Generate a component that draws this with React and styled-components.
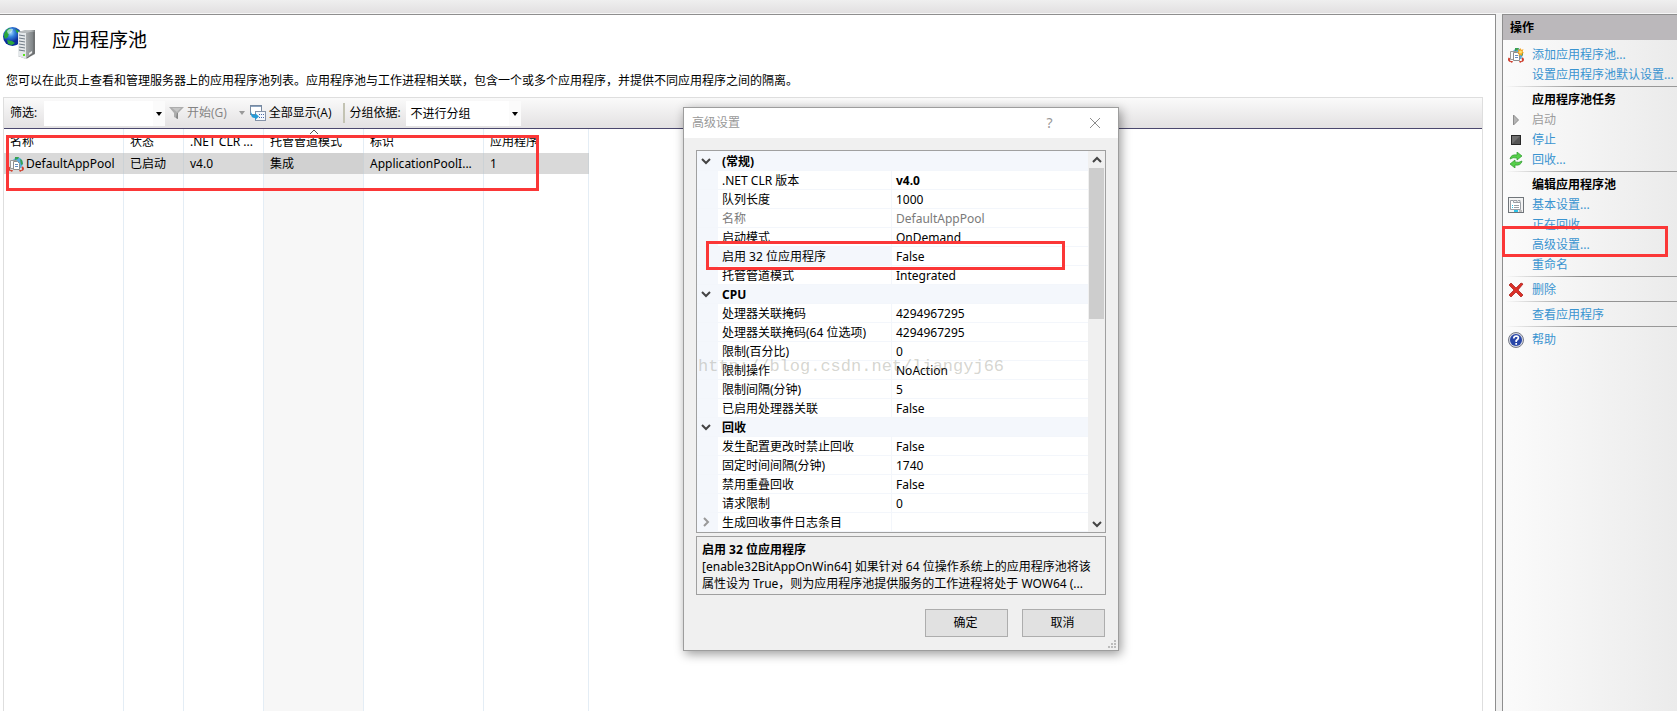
import React from "react";
import styled, { createGlobalStyle, css } from "styled-components";

const GlobalStyle = createGlobalStyle`
  *, *::before, *::after { box-sizing: border-box; }
  body {
    margin: 0;
    background: #f0f0f0;
    color: #000;
    font: 12px/16px "Noto Sans", "Noto Sans CJK SC", sans-serif;
  }
  button, input, select { font: inherit; color: inherit; border-radius: 0; }
  button { padding: 0; border: 0; background: none; }
`;

const Page = styled.div`
  position: relative;
  display: flex;
  flex-direction: column;
  height: 100vh;
  overflow: hidden;
`;
const TopStrip = styled.div`
  flex: none;
  height: 14px;
  background: linear-gradient(#efefef, #e2e0e1);
  border-bottom: 1px solid #f6f6f6;
`;
const Columns = styled.div`
  flex: 1;
  display: flex;
  gap: 6px;
  min-height: 0;
`;
const Main = styled.main`
  flex: 1;
  min-width: 0;
  display: flex;
  flex-direction: column;
  padding: 12px 12px 0 3px;
  background: #fff;
  border-top: 1px solid #8e8e8e;
  border-right: 1px solid #8e8e8e;
`;
const TitleRow = styled.header`
  display: flex;
  align-items: center;
  gap: 17px;
  height: 32px;
`;
const Title = styled.h1`
  margin: 0;
  padding-bottom: 6px;
  font-size: 19px;
  line-height: 24px;
  font-weight: 400;
`;
const Intro = styled.p`
  margin: 14px 0 8px 3px;
`;
const ListFrame = styled.section`
  flex: 1;
  min-height: 0;
  display: flex;
  flex-direction: column;
  border: 1px solid #dedede;
  border-bottom: 0;
`;
const Toolbar = styled.div`
  flex: none;
  display: flex;
  align-items: center;
  height: 31px;
  padding-left: 6px;
  background: linear-gradient(#fafafa, #e3e1e2);
  border-bottom: 1px solid #4b486e;
  font-family: "Open Sans", "Noto Sans CJK SC", sans-serif;
`;
const ToolLabel = styled.label`
  width: ${(p) => p.$width}px;
  white-space: nowrap;
`;
const Combo = styled.div`
  position: relative;
  width: ${(p) => p.$width}px;
  height: 25px;
  background: linear-gradient(90deg, #fff 0 calc(100% - 12px), #fbfbfb 0);
  input, select {
    appearance: none;
    width: 100%;
    height: 100%;
    padding: 2px 14px 0 4px;
    border: 0;
    background: transparent;
  }
  > svg {
    position: absolute;
    right: 3px;
    top: 11px;
    pointer-events: none;
  }
`;
const ToolButton = styled.button`
  display: flex;
  align-items: center;
  gap: 3px;
  height: 24px;
  margin-left: ${(p) => p.$gap}px;
  white-space: nowrap;
  &:disabled { color: #838383; }
`;
const ToolDivider = styled.span`
  width: 2px;
  height: 20px;
  margin: 0 4px 0 12px;
  background: #c3c3b3;
`;
const TableArea = styled.div`
  position: relative;
  flex: 1;
  min-height: 0;
  display: flex;
  align-items: stretch;
`;
const PoolTable = styled.table`
  width: 585px;
  table-layout: fixed;
  border-collapse: separate;
  border-spacing: 0;
  th, td {
    padding: 0 0 0 6px;
    border-right: 1px solid #e4edf5;
    text-align: left;
    font-weight: 400;
    white-space: nowrap;
  }
`;
const HeadRow = styled.tr`
  height: 24px;
  th { padding-top: 2px; }
`;
const HeadCell = styled.th`
  position: relative;
  > svg { position: absolute; left: 45px; top: 0; }
`;
const PoolRow = styled.tr`
  height: 21px;
  td { background: #d9d9d9; border-right-color: #ccd2d6; }
  td:nth-child(4) { background: #d1d1d1; }
`;
const EmptyRow = styled.tr`
  td:nth-child(4) { background: #f7f7f7; }
`;
const PoolName = styled.span`
  display: flex;
  align-items: center;
  gap: 2px;
  margin-left: -2px;
`;
const Mark = styled.span`
  position: absolute;
  z-index: 2;
  border: 3px solid #fb3737;
  pointer-events: none;
  left: ${(p) => p.$left}px;
  top: ${(p) => p.$top}px;
  width: ${(p) => p.$width}px;
  height: ${(p) => p.$height}px;
`;

const Sidebar = styled.aside`
  width: 175px;
  flex: none;
  border-top: 1px solid #8e8e8e;
  border-left: 1px solid #8e8e8e;
  background: linear-gradient(90deg, #fbfbfb, #ebebeb);
`;
const SideHead = styled.h2`
  margin: 0 0 5px;
  padding-left: 7px;
  background: #bbb8bb;
  font-size: 12px;
  line-height: 25px;
`;
const Group = styled.section`
  position: relative;
  & + &::before {
    content: "";
    display: block;
    height: 1px;
    margin: 1px 0 3px 2px;
    background: linear-gradient(90deg, transparent, #8f8f8f 45%, #9a9a9a);
  }
`;
const itemBox = css`
  display: grid;
  grid-template-columns: 24px auto;
  align-items: center;
  height: 20px;
  margin: 0;
  padding-left: 5px;
  font-size: 12px;
  white-space: nowrap;
`;
const GroupTitle = styled.h3`
  ${itemBox}
  &::before { content: ""; }
`;
const Action = styled.a`
  ${itemBox}
  color: ${(p) => (p.$off ? "#9c9c9c" : "#3a94d0")};
  text-decoration: none;
`;
const IconSlot = styled.span`
  height: 16px;
`;

const Dialog = styled.div`
  position: absolute;
  left: 683px;
  top: 107px;
  width: 436px;
  border: 1px solid #9d9d9d;
  background: #f0f0f0;
  box-shadow: 2px 3px 10px rgba(0, 0, 0, 0.4);
`;
const DialogBar = styled.header`
  display: flex;
  align-items: center;
  height: 30px;
  padding: 0 16px 0 8px;
  background: #fff;
  color: #999;
`;
const DialogTitle = styled.h2`
  flex: 1;
  margin: 0;
  font-size: 12px;
  font-weight: 400;
`;
const BarButton = styled.button`
  width: 15px;
  height: 20px;
  margin-left: 30px;
  font-size: 14px;
  display: grid;
  place-items: center;
`;
const DialogBody = styled.div`
  position: relative;
  padding: 12px 12px 13px;
`;
const GridFrame = styled.div`
  display: flex;
  height: 383px;
  border: 1px solid #a0a0a0;
  background: #f4f7fc;
`;
const PropTable = styled.table`
  flex: 1;
  table-layout: fixed;
  align-self: flex-start;
  margin-top: 1px;
  border-collapse: separate;
  border-spacing: 0;
  tr { height: 19px; }
  th, td {
    height: 19px;
    padding: 2px 0 0 4px;
    text-align: left;
    font-weight: 400;
    white-space: nowrap;
    background: #fff;
    border-bottom: 1px solid #f3f6fb;
  }
  tr > :first-child { padding: 0; background: #f4f7fc; }
`;
const CategoryRow = styled.tr`
  th, td { background: #f4f7fc; font-weight: 700; }
`;
const PropRow = styled.tr`
  color: ${(p) => (p.$off ? "#7a7a7a" : "#000")};
  th { border-right: 1px solid #f3f6fb; background: ${(p) => (p.$picked ? "#f4f7fc" : "#fff")}; }
  td:last-child { font-weight: ${(p) => (p.$bold ? 700 : 400)}; }
`;
const Toggle = styled.button`
  display: grid;
  place-items: center;
  width: 18px;
  height: 18px;
`;
const ScrollBar = styled.div`
  display: flex;
  flex-direction: column;
  width: 17px;
  padding: 0 1px;
  background: #f0f0f0;
`;
const ScrollButton = styled.button`
  display: grid;
  place-items: center;
  height: 17px;
`;
const ScrollTrack = styled.div`
  flex: 1;
  &::before {
    content: "";
    display: block;
    height: 151px;
    background: #cdcdcd;
  }
`;
const Help = styled.div`
  height: 59px;
  margin-top: 3px;
  padding: 4px 5px;
  border: 1px solid #a0a0a0;
  line-height: 17px;
`;
const HelpText = styled.p`
  margin: 0;
  white-space: nowrap;
`;
const Buttons = styled.div`
  display: flex;
  justify-content: flex-end;
  gap: 14px;
  margin: 14px 1px 0 0;
`;
const DialogButton = styled.button`
  width: 83px;
  height: 28px;
  padding-right: 2px;
  border: 1px solid #adadad;
  background: #e1e1e1;
`;
const Grip = styled.svg`
  position: absolute;
  right: 2px;
  bottom: 2px;
`;
const Watermark = styled.div`
  position: absolute;
  left: 14px;
  top: 219px;
  color: rgba(150, 150, 135, 0.4);
  font: 17px/20px "Liberation Mono", monospace;
  pointer-events: none;
`;

const DropArrow = ({ color = "#000" }) => (
  <svg width="6" height="4" viewBox="0 0 6 4"><path d="M0 0h6L3 4z" fill={color} /></svg>
);
const Chevron = ({ dir = "down", color = "#444" }) => {
  const turn = { down: 0, up: 180, right: -90 }[dir];
  return (
    <svg width="10" height="10" viewBox="0 0 10 10">
      <path d="M1 3l4 4 4-4" fill="none" stroke={color} strokeWidth="2" transform={`rotate(${turn} 5 5)`} />
    </svg>
  );
};
const ServerIcon = () => (
  <svg width="32" height="32" viewBox="0 0 32 32">
    <defs>
      <radialGradient id="globe" cx="40%" cy="30%">
        <stop offset="0" stopColor="#a8dcff" /><stop offset=".45" stopColor="#3482dc" /><stop offset="1" stopColor="#0b2d9c" />
      </radialGradient>
      <linearGradient id="tower"><stop offset="0" stopColor="#6e7478" /><stop offset=".5" stopColor="#a4a8aa" /><stop offset="1" stopColor="#73797c" /></linearGradient>
    </defs>
    <circle cx="9.500" cy="9.500" r="9.500" fill="url(#globe)" />
    <path d="M1 9Q1 4 6 1l3 2-3 3-1 4-3 2zM4 13l5 1 3 2-3 2-4-1zM12 2l4 2 1 3-3-1z" fill="#29a63a" />
    <path d="M4 4Q6 1 10 2L9 5 5 7z" fill="#d3efff" opacity=".7" />
    <path d="M15 5l5-1 12-1v24l-9 5-8-3z" fill="url(#tower)" />
    <path d="M15 5l8 1v26l-8-3z" fill="#e4e8ea" />
    <path d="M16 8l6 1M16 11l6 1M16 14l6 1M16 17l6 1M16 20l6 1M16 23l6 1" stroke="#6f7a85" />
    <path d="M15 5l7-2 10 1-9 2z" fill="#b8bcbe" />
    <path d="M31 5v21l-7 5" fill="none" stroke="#666" />
    <path d="M26 26l3-2v2l-3 2z" fill="#eee" />
    <rect x="20" y="27" width="2" height="2" fill="#5ce31d" />
  </svg>
);
const PoolIcon = ({ star }) => (
  <svg width="16" height="16" viewBox="0 0 16 16">
    <path d="M5 4Q8 0 12 2q3 2 3 6l-2 4H8z" fill="#5aaede" />
    <path d="M7 1l4 0-1 2-3 1zM12 3l2 1 1 4-2 1z" fill="#37a052" />
    <path d="M1.500 11Q0 13 2 14M14 11q2 2 0 3" fill="none" stroke="#cf4130" strokeWidth="2" />
    <path d="M1 14h4l-1 2zM15 14h-4l1 2z" fill="#cf4130" />
    <path d="M2.500 4.500h6v8h-6z" fill="#fafafa" stroke="#9a9a9a" />
    <path d="M5.500 5.500h4l2 2v6h-6z" fill="#fff" stroke="#8d8d8d" />
    <path d="M7 8.500h3M7 10.500h3" stroke="#638cc0" />
    {star && <path d="M12.500 1l1 2 2-1-1 2.500 1.500 1.500-2 .5.500 2.500-2-1-2 1 .5-2.500-2-.5 1.500-1.500-1-2.500 2 1z" fill="#f6a21e" />}
    {star && <circle cx="12.500" cy="5" r="1.500" fill="#ffe36b" />}
  </svg>
);
const FunnelIcon = () => (
  <svg width="15" height="14" viewBox="0 0 15 14">
    <path d="M0 1h15L9 7v6l-4-2V7z" fill="#adadad" /><path d="M3 2h9L8 6z" fill="#c5c5c5" /><path d="M8 7h1v6l-2-1z" fill="#858585" />
  </svg>
);
const ShowAllIcon = () => (
  <svg width="16" height="16" viewBox="0 0 16 16">
    <rect x=".5" y=".5" width="11" height="9" fill="#fff" stroke="#7789a0" />
    <path d="M1 1.500h10" stroke="#8ba3c0" />
    <rect x="5.500" y="6.500" width="10" height="9" fill="#f4f7fb" stroke="#8593a8" />
    <path d="M9 9.500h1M11 9.500h1M13 9.500h1M9 12.500h1M11 12.500h1M13 12.500h1" stroke="#4a67a8" />
    <path d="M1 6q0 4 4 4V8l4 3.500L5 15v-2Q0 13 1 6z" fill="#279bd7" />
  </svg>
);
const icons = {
  add: <PoolIcon star />,
  start: <svg width="16" height="16" viewBox="0 0 16 16"><path d="M5.500 3v10l5-5z" fill="#b5b5b5" stroke="#8d8d8d" /></svg>,
  stop: <svg width="16" height="16" viewBox="0 0 16 16"><rect x="3.500" y="3.500" width="9" height="9" fill="#555" stroke="#272727" /><path d="M4 12V4h8z" fill="#707070" /></svg>,
  recycle: (
    <svg width="16" height="16" viewBox="0 0 16 16">
      <path d="M2 7Q3 2 9 3V0l5 4-5 4V6Q5 5 2 7z" fill="#55cf49" stroke="#2e9a2f" strokeWidth=".7" />
      <path d="M14 9q-1 5-7 4v3l-5-4 5-4v2q4 1 7-1z" fill="#55cf49" stroke="#2e9a2f" strokeWidth=".7" />
    </svg>
  ),
  basic: (
    <svg width="16" height="16" viewBox="0 0 16 16">
      <rect x=".5" y=".5" width="15" height="15" fill="#f3f3f3" stroke="#70757a" />
      <path d="M2.500 12.500v-9h3v2h7v7z" fill="#fff" stroke="#9a9fa5" />
      <path d="M6 3.500h3v2M10 3.500h2v2" fill="none" stroke="#9a9fa5" />
      <path d="M6 8.500h5M6 10.500h5" stroke="#9a9fa5" /><path d="M4 8.500h1M4 10.500h1" stroke="#2dc3e8" />
      <path d="M6 14h4" stroke="#2dc3e8" strokeWidth="2" /><path d="M11 14h3" stroke="#bbb" strokeWidth="2" />
    </svg>
  ),
  remove: (
    <svg width="16" height="16" viewBox="0 0 16 16">
      <path d="M1 3l2-2 5 5 5-5 2 1-5 6 5 5-2 2-5-5-5 5-2-2 5-5z" fill="#dc2f27" stroke="#a31714" strokeWidth=".7" />
    </svg>
  ),
  help: (
    <svg width="16" height="16" viewBox="0 0 16 16">
      <circle cx="8" cy="8" r="7.500" fill="#d6d9e2" stroke="#777b88" /><circle cx="8" cy="8" r="6" fill="#2846a8" />
      <path d="M5.700 6.500Q6 4 8.200 4q2.300.2 2.200 2Q10 7.500 8.200 8.500V10M8.200 11v1.700" fill="none" stroke="#fff" strokeWidth="1.700" />
    </svg>
  ),
};

const groups = [
  { items: [["添加应用程序池...", "add"], ["设置应用程序池默认设置..."]] },
  { title: "应用程序池任务", items: [["启动", "start"], ["停止", "stop"], ["回收...", "recycle"]] },
  { title: "编辑应用程序池", marked: true, items: [["基本设置...", "basic"], ["正在回收..."], ["高级设置..."], ["重命名"]] },
  { items: [["删除", "remove"]] },
  { items: [["查看应用程序"]] },
  { items: [["帮助", "help"]] },
];

const properties = [
  { category: "(常规)" },
  { name: ".NET CLR 版本", value: "v4.0", bold: true },
  { name: "队列长度", value: "1000" },
  { name: "名称", value: "DefaultAppPool", off: true },
  { name: "启动模式", value: "OnDemand" },
  { name: "启用 32 位应用程序", value: "False", picked: true },
  { name: "托管管道模式", value: "Integrated" },
  { category: "CPU" },
  { name: "处理器关联掩码", value: "4294967295" },
  { name: "处理器关联掩码(64 位选项)", value: "4294967295" },
  { name: "限制(百分比)", value: "0" },
  { name: "限制操作", value: "NoAction" },
  { name: "限制间隔(分钟)", value: "5" },
  { name: "已启用处理器关联", value: "False" },
  { category: "回收" },
  { name: "发生配置更改时禁止回收", value: "False" },
  { name: "固定时间间隔(分钟)", value: "1740" },
  { name: "禁用重叠回收", value: "False" },
  { name: "请求限制", value: "0" },
  { name: "生成回收事件日志条目", value: "", expandable: true },
];

const columns = [
  ["名称", 120], ["状态", 60], [".NET CLR ...", 80], ["托管管道模式", 100], ["标识", 120], ["应用程序", 105],
];

function PoolList() {
  return (
    <ListFrame>
      <Toolbar>
        <ToolLabel htmlFor="filter" $width={34}>筛选:</ToolLabel>
        <Combo $width={121}><input id="filter" type="text" /><DropArrow /></Combo>
        <ToolButton $gap={4} disabled><FunnelIcon />开始(G)</ToolButton>
        <ToolButton $gap={12} disabled aria-label="开始选项"><DropArrow color="#999" /></ToolButton>
        <ToolButton $gap={5}><ShowAllIcon />全部显示(A)</ToolButton>
        <ToolDivider />
        <ToolLabel htmlFor="group" $width={57}>分组依据:</ToolLabel>
        <Combo $width={115}>
          <select id="group"><option>不进行分组</option></select><DropArrow />
        </Combo>
      </Toolbar>
      <TableArea>
        <PoolTable>
          <colgroup>{columns.map(([label, width]) => <col key={label} width={width} />)}</colgroup>
          <thead>
            <HeadRow>
              {columns.map(([label], i) => (
                <HeadCell key={label}>
                  {label}
                  {i === 3 && (
                    <svg width="10" height="6" viewBox="0 0 10 6"><path d="M1 5l4-4 4 4" fill="none" stroke="#555" /></svg>
                  )}
                </HeadCell>
              ))}
            </HeadRow>
          </thead>
          <tbody>
            <PoolRow>
              <td><PoolName><PoolIcon />DefaultAppPool</PoolName></td>
              <td>已启动</td><td>v4.0</td><td>集成</td><td>ApplicationPoolI...</td><td>1</td>
            </PoolRow>
            <EmptyRow>{columns.map(([label]) => <td key={label} />)}</EmptyRow>
          </tbody>
        </PoolTable>
        <Mark $left={2} $top={6} $width={533} $height={56} />
      </TableArea>
    </ListFrame>
  );
}

function Actions() {
  return (
    <Sidebar>
      <SideHead>操作</SideHead>
      {groups.map((group, i) => (
        <Group key={i}>
          {group.title && <GroupTitle>{group.title}</GroupTitle>}
          {group.items.map(([label, icon]) => (
            <Action key={label} href="#" $off={icon === "start"}>
              <IconSlot>{icons[icon]}</IconSlot>
              {label}
            </Action>
          ))}
          {group.marked && <Mark $left={-1} $top={55} $width={166} $height={31} />}
        </Group>
      ))}
    </Sidebar>
  );
}

function AdvancedSettings() {
  return (
    <Dialog role="dialog" aria-labelledby="dialog-title">
      <DialogBar>
        <DialogTitle id="dialog-title">高级设置</DialogTitle>
        <BarButton aria-label="帮助">?</BarButton>
        <BarButton aria-label="关闭">
          <svg width="12" height="12" viewBox="0 0 12 12"><path d="M1 1l10 10M11 1L1 11" stroke="#8d8d8d" /></svg>
        </BarButton>
      </DialogBar>
      <DialogBody>
        <GridFrame>
          <PropTable>
            <colgroup><col width="21" /><col width="174" /><col /></colgroup>
            <tbody>
              {properties.map((p) =>
                p.category ? (
                  <CategoryRow key={p.category}>
                    <td><Toggle aria-label={p.category}><Chevron /></Toggle></td>
                    <th colSpan={2}>{p.category}</th>
                  </CategoryRow>
                ) : (
                  <PropRow key={p.name} $off={p.off} $bold={p.bold} $picked={p.picked}>
                    <td>{p.expandable && <Toggle aria-label={p.name}><Chevron dir="right" color="#999" /></Toggle>}</td>
                    <th scope="row">{p.name}</th>
                    <td>{p.value}</td>
                  </PropRow>
                )
              )}
            </tbody>
          </PropTable>
          <ScrollBar>
            <ScrollButton aria-label="向上滚动"><Chevron dir="up" /></ScrollButton>
            <ScrollTrack />
            <ScrollButton aria-label="向下滚动"><Chevron /></ScrollButton>
          </ScrollBar>
        </GridFrame>
        <Mark $left={22} $top={103} $width={359} $height={29} />
        <Watermark>http://blog.csdn.net/liangyj66</Watermark>
        <Help>
          <b>启用 32 位应用程序</b>
          <HelpText>[enable32BitAppOnWin64] 如果针对 64 位操作系统上的应用程序池将该</HelpText>
          <HelpText>属性设为 True，则为应用程序池提供服务的工作进程将处于 WOW64 (...</HelpText>
        </Help>
        <Buttons>
          <DialogButton>确定</DialogButton>
          <DialogButton>取消</DialogButton>
        </Buttons>
        <Grip width="8" height="8" viewBox="0 0 8 8">
          <path d="M6 0h2v2H6zM3 3h2v2H3zM6 3h2v2H6zM0 6h2v2H0zM3 6h2v2H3zM6 6h2v2H6z" fill="#bcbcbc" />
        </Grip>
      </DialogBody>
    </Dialog>
  );
}

export default function App() {
  return (
    <Page>
      <GlobalStyle />
      <TopStrip />
      <Columns>
        <Main>
          <TitleRow><ServerIcon /><Title>应用程序池</Title></TitleRow>
          <Intro>您可以在此页上查看和管理服务器上的应用程序池列表。应用程序池与工作进程相关联，包含一个或多个应用程序，并提供不同应用程序之间的隔离。</Intro>
          <PoolList />
        </Main>
        <Actions />
      </Columns>
      <AdvancedSettings />
    </Page>
  );
}
